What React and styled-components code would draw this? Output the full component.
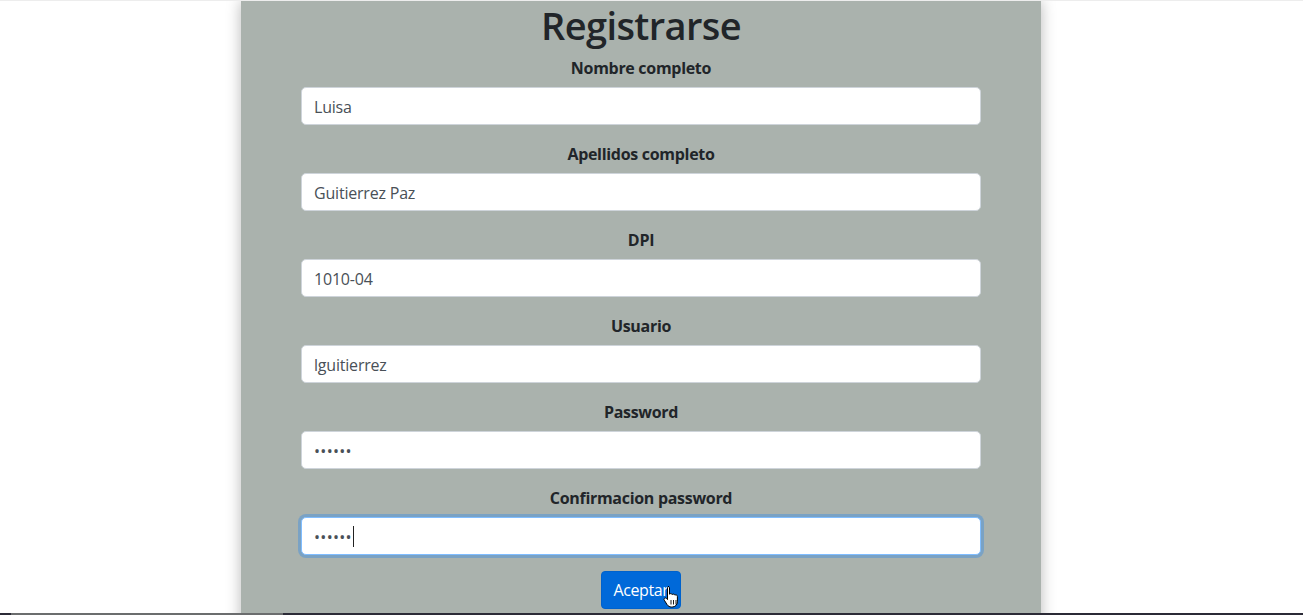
import React from "react";
import styled, { createGlobalStyle } from "styled-components";

const Global = createGlobalStyle`
  html, body { margin: 0; padding: 0; background: #fff; }
  body {
    font-family: "Open Sans", "Noto Sans", sans-serif;
    color: #212529;
    border-top: 1px solid #ededed;
    overflow: hidden;
  }
  * { box-sizing: border-box; }
`;

const Page = styled.div`
  display: flex;
  padding-left: 241px;
  min-height: 700px;
`;

const Panel = styled.main`
  width: 800px;
  background: #aab2ad;
  box-shadow: 0 0 14px rgba(0, 0, 0, 0.28);
  padding: 0 60px 40px;
  display: flex;
  flex-direction: column;
  align-items: stretch;
`;

const Title = styled.h1`
  margin: 0 0 6px;
  padding-top: 1px;
  font-size: 38px;
  line-height: 47px;
  font-weight: 600;
  letter-spacing: -0.6px;
  text-align: center;
  color: #212529;
`;

const Group = styled.div`
  display: flex;
  flex-direction: column;
  margin-bottom: 16px;
`;

const Label = styled.label`
  font-size: 16px;
  line-height: 24px;
  padding-top: 1px;
  height: 24px;
  font-weight: 700;
  text-align: center;
  margin-bottom: 8px;
  letter-spacing: -0.3px;
`;

const Field = styled.div`
  position: relative;
`;

const Input = styled.input`
  display: block;
  height: 38px;
  width: 100%;
  border: 1px solid ${(p) => (p.$focused ? "#80bdff" : "#ced4da")};
  border-radius: 5px;
  padding: 2px 12px 0;
  font-family: inherit;
  font-size: 16px;
  color: #495057;
  background: #fff;
  outline: none;
  box-shadow: ${(p) => (p.$focused ? "0 0 0 3px rgba(0, 123, 255, 0.28)" : "none")};
  letter-spacing: ${(p) => (p.type === "password" ? "0.3px" : "-0.2px")};
`;

const Caret = styled.span`
  position: absolute;
  left: 52px;
  top: 9px;
  width: 1px;
  height: 21px;
  background: #222;
`;

const Actions = styled.div`
  display: flex;
  justify-content: center;
`;

const Button = styled.button`
  height: 38px;
  padding: 0 12px;
  border: 1px solid #0062cc;
  border-radius: 4px;
  background: #0069d9;
  color: #fff;
  font-family: inherit;
  font-size: 16px;
  letter-spacing: -0.4px;
  cursor: pointer;
  position: relative;
`;

const Cursor = styled.svg`
  position: absolute;
  left: 61px;
  top: 13px;
  pointer-events: none;
`;

const BottomEdge = styled.div`
  position: fixed;
  left: 0;
  right: 0;
  bottom: 0;
  height: 2px;
  background: linear-gradient(
    to right,
    #2b2a36 0 11px,
    #6b6d6e 11px 283px,
    #2b2a36 283px 100%
  );
`;

const fields = [
  { label: "Nombre completo", value: "Luisa" },
  { label: "Apellidos completo", value: "Guitierrez Paz" },
  { label: "DPI", value: "1010-04" },
  { label: "Usuario", value: "lguitierrez" },
  { label: "Password", value: "123456", type: "password" },
  { label: "Confirmacion password", value: "123456", type: "password", focused: true },
];

export default function App() {
  return (
    <>
      <Global />
      <Page>
        <Panel>
          <Title>Registrarse</Title>
          {fields.map((f) => (
            <Group key={f.label}>
              <Label>{f.label}</Label>
              <Field>
                <Input
                  type={f.type || "text"}
                  defaultValue={f.value}
                  $focused={f.focused}
                  readOnly
                />
                {f.focused && <Caret />}
              </Field>
            </Group>
          ))}
          <Actions>
            <Button>
              Aceptar
              <Cursor width="17" height="24" viewBox="0 0 17 24">
                <path
                  d="M5 1.5c.9 0 1.5.6 1.5 1.5v6.2c.3-.4.8-.6 1.3-.6.7 0 1.2.4 1.4 1 .3-.3.7-.5 1.2-.5.7 0 1.2.4 1.4 1 .3-.2.6-.3 1-.3.9 0 1.6.7 1.6 1.6v5.4c0 3-2.2 5.2-5.2 5.2H8.4c-1.8 0-3.2-.8-4.2-2.2L1.3 15.2c-.5-.7-.3-1.6.4-2 .6-.4 1.4-.3 1.9.3l.9 1.1V3c0-.9.6-1.5 1.5-1.5z"
                  fill="#fff"
                  stroke="#000"
                  strokeWidth="1"
                  strokeLinejoin="round"
                />
                <path d="M8 15v4.5M10.5 15v4.5M13 15v4.5" stroke="#000" strokeWidth="0.9" />
              </Cursor>
            </Button>
          </Actions>
        </Panel>
      </Page>
      <BottomEdge />
    </>
  );
}
